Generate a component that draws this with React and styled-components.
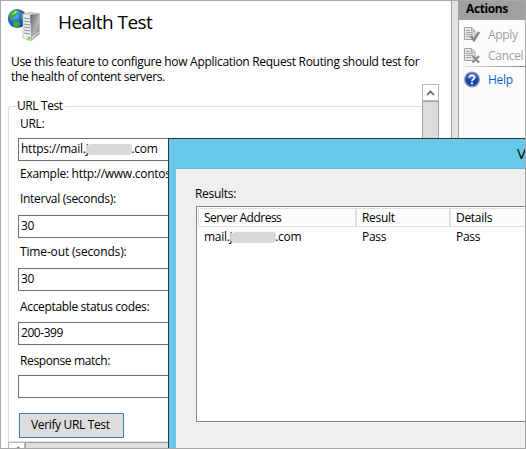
import React from "react";
import styled, { createGlobalStyle } from "styled-components";

const Global = createGlobalStyle`
  * { box-sizing: border-box; }
  body { margin: 0; overflow: hidden; }
`;

const Frame = styled.div`
  position: relative;
  display: flex;
  width: 526px;
  height: 449px;
  overflow: hidden;
  border: 1px solid #a9a9a9;
  background: #fff;
  color: #000;
  font: 12px/16px "Open Sans", "Noto Sans", sans-serif;
`;

const Text = styled.span`
  display: block;
  width: max-content;
  white-space: nowrap;
  letter-spacing: ${(p) => p.$track ?? -0.3}px;
`;

const Main = styled.main`
  width: 450px;
  flex: none;
  display: flex;
  flex-direction: column;
`;

const Header = styled.header`
  display: flex;
  height: 53px;
  padding: 7px 0 0 6px;
  gap: 17px;
  svg { flex: none; }
`;

const Title = styled.h1`
  margin: 0;
  font-size: 19px;
  line-height: 29px;
  font-weight: 400;
  letter-spacing: ${(p) => p.$track}px;
  white-space: nowrap;
`;

const Description = styled.div`
  height: 30px;
  padding-left: 10px;
  line-height: 15px;
`;

const ScrollArea = styled.div`
  display: flex;
  width: 438px;
  height: 358px;
  padding-left: 7px;
`;

const Group = styled.fieldset`
  width: 414px;
  height: 380px;
  min-width: 0;
  margin: 13px 0 0;
  padding: 0 0 0 10px;
  border: 1px solid #d5dfe5;
  border-right: 0;
  border-radius: 3px 0 0 0;
`;

const Legend = styled.legend`
  margin-left: -3px;
  padding: 0 2px 0 1px;
  height: 18px;
  line-height: 18px;
`;

const Viewport = styled.div`
  display: flex;
  flex-direction: column;
  flex: none;
  height: 358px;
  overflow: hidden;
`;

const Form = styled.div`
  display: flex;
  flex-direction: column;
  margin-left: -1px;
`;

const Label = styled.label`
  height: 16px;
  margin: ${(p) => p.$top ?? 0}px 0 ${(p) => p.$bottom ?? 8}px 2px;
`;

const Field = styled.div`
  display: flex;
  align-items: center;
  width: 390px;
  height: 23px;
  padding: 0 0 1px 2px;
  border: 1px solid #707070;
  background: #fff;
`;

const Button = styled.button`
  width: 105px;
  height: 25px;
  margin: 15px 0 0 1px;
  padding: 0 0 1px 11px;
  border: 1px solid #3c7fb1;
  background: #ddd;
  color: #000;
  font: inherit;
`;

const Redaction = styled.span`
  display: inline-block;
  width: ${(p) => p.$w}px;
  height: 11px;
  margin: 0 -1px 0 -2px;
  border-radius: 6px 3px 4px 6px;
  background: #dadada;
  vertical-align: -2px;
`;

const VScroll = styled.div`
  width: 17px;
  flex: none;
  display: flex;
  flex-direction: column;
`;

const ScrollButton = styled.div`
  display: grid;
  place-items: center;
  width: 17px;
  height: 17px;
  flex: none;
  border: 1px solid #b8b8b8;
  background: #fff;
`;

const Thumb = styled.div`
  flex: 1;
  border: 1px solid #a0a0a0;
  background: #dcdcdc;
`;

const HScroll = styled.div`
  display: flex;
  height: 6px;
  width: 430px;
  margin-left: 7px;
  overflow: hidden;
`;

const HThumb = styled(Thumb)`
  height: 17px;
`;

const Splitter = styled.div`
  width: 8px;
  flex: none;
  border: solid #a0a0a0;
  border-width: 0 1px;
  background: #e3e3e3;
`;

const Actions = styled.aside`
  flex: 1;
  min-width: 0;
  overflow: hidden;
  background: #fcfcfc;
`;

const ActionsTitle = styled.div`
  height: 19px;
  padding-left: 7px;
  background: #a0a0a0;
  font-weight: 700;
  line-height: 15px;
`;

const Action = styled.div`
  display: flex;
  align-items: center;
  gap: 8px;
  height: 21px;
  padding-left: 5px;
  color: ${(p) => (p.$link ? "#0662d0" : "#a0a0a0")};
  svg { flex: none; }
`;

const ActionList = styled.div`
  padding-top: 4px;
`;

const Divider = styled.div`
  height: 1px;
  margin: 0 0 2px 4px;
  background: linear-gradient(90deg, #e5e5e5, #888);
`;

const Dialog = styled.section`
  position: absolute;
  left: 167px;
  top: 137px;
  width: 720px;
  height: 360px;
  padding-left: 7px;
  border: 1px solid #333;
  background: #66c9e9;
`;

const DialogTitle = styled.div`
  height: 29px;
  padding: 6px 0 0 341px;
  font-size: 15px;
`;

const DialogBody = styled.div`
  height: 330px;
  padding: 17px 0 0 20px;
  border-top: 1px solid #6fb3cf;
  background: #efefef;
`;

const Caption = styled.div`
  margin-left: -1px;
`;

const Results = styled.div`
  width: 600px;
  height: 216px;
  margin-top: 4px;
  padding: 1px;
  border: 1px solid #828790;
  background: #fff;
`;

const Row = styled.div`
  display: grid;
  grid-template-columns: 158px 94px 1fr;
  height: ${(p) => (p.$head ? 20 : 18)}px;
  line-height: ${(p) => (p.$head ? 20 : 18)}px;
`;

const HeadCell = styled.div`
  height: 19px;
  padding-left: 5px;
  line-height: 18px;
  border: 1px solid #e0e0e0;
  background: #fcfcfc;
`;

const Cell = styled.div`
  padding-left: 6px;
`;

function ServerIcon() {
  return (
    <svg width="34" height="35" viewBox="0 0 34 35">
      <defs>
        <radialGradient id="globe" cx=".35" cy=".3" r=".75">
          <stop offset="0" stopColor="#7cc6f5" />
          <stop offset=".5" stopColor="#2469c9" />
          <stop offset="1" stopColor="#10318c" />
        </radialGradient>
        <linearGradient id="side" x1="0" y1="0" x2="1" y2="1">
          <stop offset="0" stopColor="#606060" />
          <stop offset=".6" stopColor="#b4b4b4" />
          <stop offset="1" stopColor="#777" />
        </linearGradient>
      </defs>
      <circle cx="10.3" cy="10.5" r="9.5" fill="url(#globe)" />
      <path d="M2 8Q4 2 10 2L13 3L10 5L9 8L5 10L6 12L3 11ZM14 4L18 6L19 11L16 13L14 9L15 7ZM6 14L11 13L14 16L10 20L6 18Z" fill="#38a936" />
      <path d="M4 7L8 3L11 3L8 6ZM15 6L17 7L16 9Z" fill="#a6dc74" />
      <path d="M16 6L22 4.5L32.5 5.5L32.5 26L24 33L16 30Z" fill="#d4d5d7" stroke="#aaa" strokeWidth=".6" />
      <path d="M23 7L32 5.5V26L24 32.5Z" fill="url(#side)" />
      <path d="M16.5 7L23 7L24 32L16.5 30Z" fill="#eceef2" />
      <path d="M17 10L23 11M17 13L23 14M17 16L23 17M17 19L23 20M17 22L23 23M17 25L23 26" stroke="#8c929b" strokeWidth="1.2" />
      <path d="M25 30L32 24" stroke="#eee" />
      <rect x="20.5" y="29" width="3" height="2.5" fill="#67df12" />
    </svg>
  );
}

function DocIcon({ cancel }) {
  return (
    <svg width="16" height="17" viewBox="0 0 16 17">
      <path d="M0.5 1.5H7.5L11 5V13.5H0.5Z" fill="#e6e6e6" stroke="#a5a5a5" />
      <path d="M7.5 1.5V5H11M2 4.5H6M2 6.5H9M2 8.5H9M2 10.5H7" fill="none" stroke="#a8a8a8" />
      {cancel ? (
        <path d="M8.5 9L15 15.5M15 9L8.5 15.5" stroke="#888" strokeWidth="2" />
      ) : (
        <path d="M7 10L10 14.2L15 6" fill="none" stroke="#888" strokeWidth="2.6" />
      )}
    </svg>
  );
}

function HelpIcon() {
  return (
    <svg width="16" height="17" viewBox="0 0 16 17">
      <circle cx="8" cy="8.5" r="7.3" fill="#1d43ab" stroke="#8d9bb8" strokeWidth="1.4" />
      <path d="M2.5 7A5.6 5.6 0 0 1 13.5 7Q8 9 2.5 7Z" fill="#4a72c8" />
      <path d="M5.5 6.5Q5.5 4.3 8 4.3Q10.5 4.3 10.5 6.4Q10.5 7.6 9 8.4Q8 9 8 10.2" fill="none" stroke="#fff" strokeWidth="1.7" />
      <circle cx="8" cy="12.4" r="1.1" fill="#fff" />
    </svg>
  );
}

export default function App() {
  return (
    <Frame>
      <Global />
      <Main>
        <Header>
          <ServerIcon />
          <Title $track={-0.55}>Health Test</Title>
        </Header>
        <Description>
          <Text>Use this feature to configure how Application Request Routing should test for</Text>
          <Text $track={-0.35}>the health of content servers.</Text>
        </Description>
        <ScrollArea>
          <Viewport>
            <Group>
              <Legend><Text $track={-0.4}>URL Test</Text></Legend>
              <Form>
                <Label $top={1} $bottom={6}><Text>URL:</Text></Label>
                <Field><Text $track={-0.25}>https://mail.j<Redaction $w={46} />.com</Text></Field>
                <Label $top={5} $bottom={9}><Text $track={-0.28}>Example: http://www.contoso.com/test.aspx</Text></Label>
                <Label><Text>Interval (seconds):</Text></Label>
                <Field><Text>30</Text></Field>
                <Label $top={6} $bottom={8}><Text $track={-0.15}>Time-out (seconds):</Text></Label>
                <Field><Text>30</Text></Field>
                <Label $top={8} $bottom={7}><Text $track={-0.34}>Acceptable status codes:</Text></Label>
                <Field><Text $track={-0.45}>200-399</Text></Field>
                <Label $top={8} $bottom={6}><Text $track={-0.38}>Response match:</Text></Label>
                <Field />
                <Button><Text $track={-0.35}>Verify URL Test</Text></Button>
              </Form>
            </Group>
          </Viewport>
          <VScroll>
            <ScrollButton>
              <svg width="9" height="6" viewBox="0 0 9 6"><path d="M1 5L4.5 1.5L8 5" fill="none" stroke="#606060" strokeWidth="1.7" /></svg>
            </ScrollButton>
            <Thumb />
          </VScroll>
        </ScrollArea>
        <HScroll>
          <ScrollButton>
            <svg width="6" height="9" viewBox="0 0 6 9"><path d="M5 1L1.5 4.5L5 8" fill="none" stroke="#606060" strokeWidth="1.7" /></svg>
          </ScrollButton>
          <HThumb />
        </HScroll>
      </Main>
      <Splitter />
      <Actions>
        <ActionsTitle><Text $track={-0.4}>Actions</Text></ActionsTitle>
        <ActionList>
          <Action><DocIcon /><Text>Apply</Text></Action>
          <Action><DocIcon cancel /><Text>Cancel</Text></Action>
          <Divider />
          <Action $link><HelpIcon /><Text>Help</Text></Action>
        </ActionList>
      </Actions>
      <Dialog>
        <DialogTitle>Verify URL Test</DialogTitle>
        <DialogBody>
          <Caption><Text>Results:</Text></Caption>
          <Results>
            <Row $head>
              <HeadCell><Text $track={-0.5}>Server Address</Text></HeadCell>
              <HeadCell><Text>Result</Text></HeadCell>
              <HeadCell><Text>Details</Text></HeadCell>
            </Row>
            <Row>
              <Cell><Text>mail.j<Redaction $w={46} />.com</Text></Cell>
              <Cell><Text>Pass</Text></Cell>
              <Cell><Text>Pass</Text></Cell>
            </Row>
          </Results>
        </DialogBody>
      </Dialog>
    </Frame>
  );
}
